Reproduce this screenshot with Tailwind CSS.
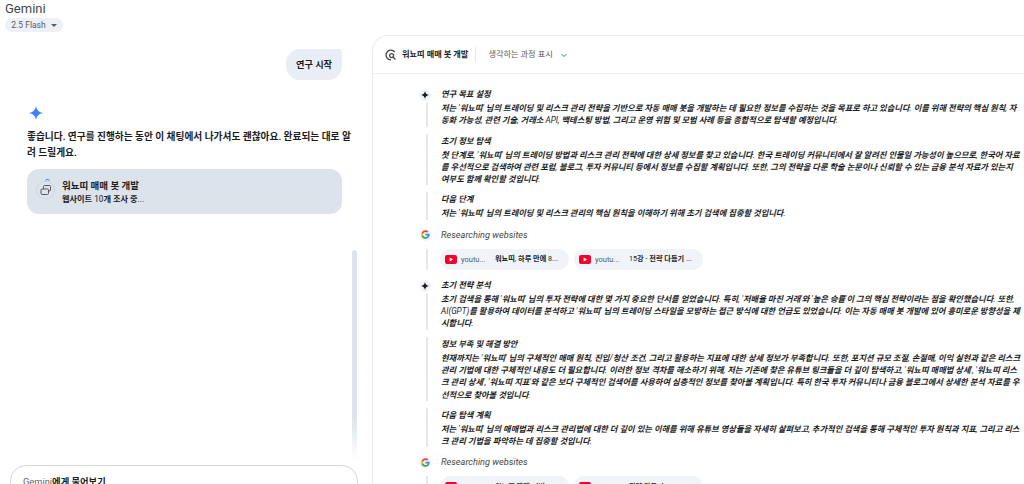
<!DOCTYPE html>
<html lang="ko">
<head>
  <meta charset="UTF-8">
  <title>Gemini</title>
  <script src="https://cdn.jsdelivr.net/npm/@tailwindcss/browser@4"></script>
</head>
<body class="h-[484px] overflow-hidden bg-white text-[#1b1c1d] font-['Roboto','Noto_Sans_CJK_KR',sans-serif]">
  <div class="flex h-[484px] overflow-hidden">
    <!-- Chat column -->
    <div class="relative w-[372px] shrink-0 flex flex-col">
      <div class="pl-[5px] pt-[1px] h-[37px]">
        <div class="text-[13px] leading-[15px] text-[#444746]">Gemini</div>
        <div class="mt-[2px] w-[58px] h-[14px] rounded-full bg-[#edf0f7] flex items-center justify-center gap-[5px] text-[8.5px] text-[#575b5f]">
          2.5 Flash
          <span class="w-0 h-0 border-x-[3px] border-x-transparent border-t-[3px] border-t-[#575b5f]"></span>
        </div>
      </div>
      <div class="flex justify-end pr-[30px] mt-[12px]">
        <div class="w-[56px] h-[31px] flex items-center justify-center bg-[#e9eef6] rounded-[14px] rounded-tr-[3px] text-[9.2px] font-bold">연구 시작</div>
      </div>
      <div class="ml-[27px] mt-[25px] w-[315px]">
        <svg class="ml-[2px]" width="14" height="16" viewBox="0 0 24 24"><path d="M12 0C13 7 17 11 24 12C17 13 13 17 12 24C11 17 7 13 0 12C7 11 11 7 12 0Z" fill="#3b82f6"/></svg>
        <p class="mt-[8px] text-[9.7px] leading-[16px] font-bold whitespace-nowrap">좋습니다. 연구를 진행하는 동안 이 채팅에서 나가셔도 괜찮아요. 완료되는 대로 알<br>려 드릴게요.</p>
        <div class="mt-[8px] h-[45px] rounded-[12px] bg-[#dde3ea] flex items-center pl-[9px] gap-[7px]">
          <div class="w-[19px] h-[18px] -mt-[3px] rounded-full border border-[#cfd6df] flex items-center justify-center relative">
            <svg width="12" height="12" viewBox="0 0 12 12" fill="none" stroke="#575b5f" stroke-width="1"><rect x="1" y="5" width="7.5" height="5.500" rx="1"/><path d="M3.500 5V2.500a1 1 0 0 1 1-1h5a1 1 0 0 1 1 1v3.500a1 1 0 0 1-1 1h-1"/></svg>
            <span class="absolute top-[-3px] left-[8px] w-[5px] h-[3px] border-t border-[#3b82f6] rounded-t-full"></span>
          </div>
          <div class="pt-[1px]">
            <div class="text-[9.5px] leading-[14px] font-bold">워뇨띠 매매 봇 개발</div>
            <div class="text-[8.2px] leading-[13px] font-bold">웹사이트 <span class="font-normal">10</span>개 조사 중<span class="font-normal">...</span></div>
          </div>
        </div>
      </div>
      <!-- scrollbar over the chat column -->
      <div class="absolute left-[352px] top-[250px] w-[5px] h-[210px] rounded-full bg-gradient-to-b from-[#dde3ea] from-80% to-white"></div>
      <!-- prompt box -->
      <div class="absolute left-[10px] top-[465px] w-[348px] h-[40px] rounded-[16px] border border-[#d5d8dc] bg-white pl-[12px] pt-[10px] text-[9.3px] leading-[12px] text-[#5f6368]">
        Gemini<span class="font-bold text-[#1b1c1d]">에게 물어보기</span>
      </div>
    </div>

    <!-- Research panel -->
    <div class="mt-[35px] flex-1 min-w-0 rounded-tl-[16px] border-l border-t border-[#e9ebee] bg-white">
      <div class="h-[38px] flex items-center border-b border-[#eceef1] pl-[12px]">
        <svg width="12" height="12" viewBox="0 0 12 12" fill="none" stroke="#444746" stroke-width="1.3"><path d="M9.800 3.200A4.800 4.800 0 1 0 6 10.800"/><circle cx="6.600" cy="6.600" r="2"/><path d="M8.200 8.200l2.300 2.300"/></svg>
        <span class="ml-[5px] text-[8.2px] font-bold">워뇨띠 매매 봇 개발</span>
        <span class="ml-[7px] h-[15px] w-px bg-[#e3e6ea]"></span>
        <span class="ml-[12px] text-[8.2px] text-[#575b5f]">생각하는 과정 표시</span>
        <svg class="ml-[7px]" width="8" height="8" viewBox="0 0 8 8" fill="none" stroke="#3f6fc4" stroke-width="1"><path d="M1.500 3l2.500 2.500L6.500 3"/></svg>
      </div>
      <div id="thoughts" class="pl-[68px] pt-[13px]"></div>
    </div>
  </div>

  <script>
    const thoughts = [
      { icon: 'spark', blocks: [
        ['연구 목표 설정', "저는 '워뇨띠' 님의 트레이딩 및 리스크 관리 전략을 기반으로 자동 매매 봇을 개발하는 데 필요한 정보를 수집하는 것을 목표로 하고 있습니다. 이를 위해 전략의 핵심 원칙, 자", '동화 가능성, 관련 기술, 거래소 API, 백테스팅 방법, 그리고 운영 위험 및 모범 사례 등을 종합적으로 탐색할 예정입니다.'],
        ['초기 정보 탐색', "첫 단계로, '워뇨띠' 님의 트레이딩 방법과 리스크 관리 전략에 대한 상세 정보를 찾고 있습니다. 한국 트레이딩 커뮤니티에서 잘 알려진 인물일 가능성이 높으므로, 한국어 자료", '를 우선적으로 검색하여 관련 포럼, 블로그, 투자 커뮤니티 등에서 정보를 수집할 계획입니다. 또한, 그의 전략을 다룬 학술 논문이나 신뢰할 수 있는 금융 분석 자료가 있는지', '여부도 함께 확인할 것입니다.'],
        ['다음 단계', "저는 '워뇨띠' 님의 트레이딩 및 리스크 관리의 핵심 원칙을 이해하기 위해 초기 검색에 집중할 것입니다."]
      ]},
      { icon: 'google', chips: ['워뇨띠, 하루 만에 8...', '15강 - 전략 다듬기 ...'] },
      { icon: 'spark', blocks: [
        ['초기 전략 분석', "초기 검색을 통해 '워뇨띠' 님의 투자 전략에 대한 몇 가지 중요한 단서를 얻었습니다. 특히, '저배율 마진 거래'와 '높은 승률'이 그의 핵심 전략이라는 점을 확인했습니다. 또한,", "AI(GPT)를 활용하여 데이터를 분석하고 '워뇨띠' 님의 트레이딩 스타일을 모방하는 접근 방식에 대한 언급도 있었습니다. 이는 자동 매매 봇 개발에 있어 흥미로운 방향성을 제", '시합니다.'],
        ['정보 부족 및 해결 방안', "현재까지는 '워뇨띠' 님의 구체적인 매매 원칙, 진입/청산 조건, 그리고 활용하는 지표에 대한 상세 정보가 부족합니다. 또한, 포지션 규모 조절, 손절매, 이익 실현과 같은 리스크", "관리 기법에 대한 구체적인 내용도 더 필요합니다. 이러한 정보 격차를 해소하기 위해, 저는 기존에 찾은 유튜브 링크들을 더 깊이 탐색하고, '워뇨띠 매매법 상세', '워뇨띠 리스", "크 관리 상세', '워뇨띠 지표'와 같은 보다 구체적인 검색어를 사용하여 심층적인 정보를 찾아볼 계획입니다. 특히 한국 투자 커뮤니티나 금융 블로그에서 상세한 분석 자료를 우", '선적으로 찾아볼 것입니다.'],
        ['다음 탐색 계획', "저는 '워뇨띠' 님의 매매법과 리스크 관리법에 대한 더 깊이 있는 이해를 위해 유튜브 영상들을 자세히 살펴보고, 추가적인 검색을 통해 구체적인 투자 원칙과 지표, 그리고 리스", '크 관리 기법을 파악하는 데 집중할 것입니다.']
      ]},
      { icon: 'google', chips: ['워뇨띠 매매 기법...', '전략 다듬기 ...'] }
    ];

    const icons = {
      spark: '<svg width="8" height="8" viewBox="0 0 24 24"><path d="M12 0C13 7 17 11 24 12C17 13 13 17 12 24C11 17 7 13 0 12C7 11 11 7 12 0Z" fill="#1b1c1d"/></svg>',
      google: '<svg width="9" height="9" viewBox="0 0 24 24"><path d="M23 12.300c0-.8-.1-1.600-.2-2.300H12v4.400h6.200a5.300 5.300 0 0 1-2.300 3.500v2.900h3.700c2.200-2 3.400-5 3.400-8.500z" fill="#4285f4"/><path d="M12 23.500c3.100 0 5.700-1 7.600-2.800l-3.700-2.900c-1 .7-2.300 1.100-3.900 1.100-3 0-5.500-2-6.400-4.700H1.800v3c1.900 3.800 5.800 6.300 10.200 6.300z" fill="#34a853"/><path d="M5.600 14.200a6.900 6.900 0 0 1 0-4.400v-3H1.800a11.500 11.500 0 0 0 0 10.400z" fill="#fbbc05"/><path d="M12 5.100c1.700 0 3.200.6 4.400 1.700l3.300-3.300C17.700 1.600 15.100.5 12 .5 7.600.5 3.700 3 1.800 6.800l3.800 3C6.500 7.100 9 5.100 12 5.100z" fill="#ea4335"/></svg>'
    };

    // Latin letters and punctuation sit in the lighter weight, only the hangul is heavy
    function thin(text) {
      return text.replace(/[A-Za-z0-9().,'\/-]+/g, m => `<span class="font-normal">${m}</span>`);
    }

    function iconDot(name) {
      return `<span class="absolute left-[-22px] top-[2px] w-[12px] h-[12px] rounded-full bg-[#f0f4f9] flex items-center justify-center">${icons[name]}</span>`;
    }

    function renderBlock(block, first, icon) {
      const [title, ...lines] = block;
      return `
        <div class="relative mb-[7px]">
          ${first ? iconDot(icon) : ''}
          <span class="absolute left-[-15px] ${first ? 'top-[15px]' : 'top-0'} bottom-0 w-[2px] bg-[#e6e8ec]"></span>
          <div class="text-[8.25px] leading-[15px] font-bold italic">${title}</div>
          ${lines.map(l => `<div class="text-[8.25px] leading-[12.3px] font-bold italic whitespace-nowrap">${thin(l)}</div>`).join('')}
        </div>`;
    }

    function renderChips(item) {
      const chips = item.chips.map(c => `
        <div class="w-[129px] h-[21px] rounded-full bg-[#f0f4f9] flex items-center pl-[5px] whitespace-nowrap overflow-hidden">
          <svg class="shrink-0" width="12" height="9" viewBox="0 0 12 9"><rect width="12" height="9" rx="2" fill="#f5002c"/><path d="M4.700 2.500L8 4.500L4.700 6.500Z" fill="#fff"/></svg>
          <span class="ml-[4px] w-[34px] shrink-0 text-[7.5px] text-[#575b5f]">youtu...</span>
          <span class="text-[7.2px] font-bold">${thin(c)}</span>
        </div>`).join('');
      return `
        <div class="relative mb-[8px]">
          ${iconDot(item.icon)}
          <div class="text-[9.2px] leading-[15px] italic text-[#444746]">Researching websites</div>
          <div class="relative mt-[7px] flex gap-[5px] -ml-[1px]">
            <span class="absolute left-[-14px] top-0 bottom-0 w-[2px] bg-[#e6e8ec]"></span>
            ${chips}
          </div>
        </div>`;
    }

    document.getElementById('thoughts').innerHTML = thoughts.map(item =>
      item.chips ? renderChips(item) : item.blocks.map((b, i) => renderBlock(b, i === 0, item.icon)).join('')
    ).join('');
  </script>
</body>
</html>
